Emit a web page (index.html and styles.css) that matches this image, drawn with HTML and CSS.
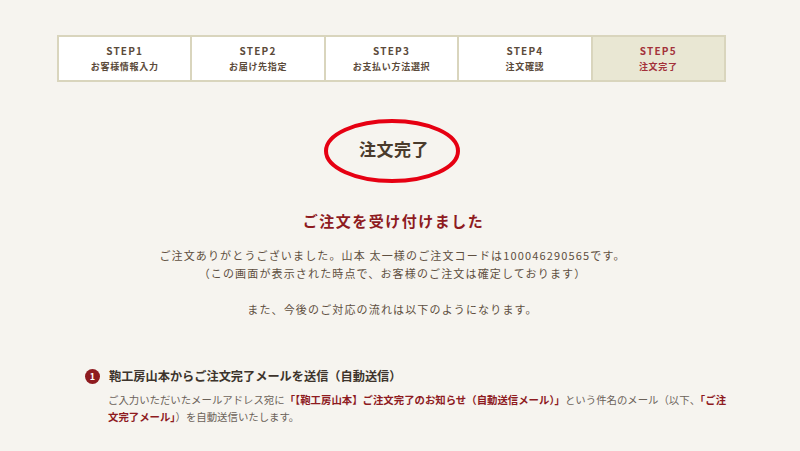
FILE: index.html
```html
<!DOCTYPE html>
<html lang="ja">
<head>
<meta charset="utf-8">
<link rel="stylesheet" href="styles.css">
</head>
<body>
<div class="page">
  <ol class="steps">
    <li class="step"><span class="step-no">STEP1</span><span class="step-label">お客様情報入力</span></li>
    <li class="step"><span class="step-no">STEP2</span><span class="step-label">お届け先指定</span></li>
    <li class="step"><span class="step-no">STEP3</span><span class="step-label">お支払い方法選択</span></li>
    <li class="step"><span class="step-no">STEP4</span><span class="step-label">注文確認</span></li>
    <li class="step current"><span class="step-no">STEP5</span><span class="step-label">注文完了</span></li>
  </ol>

  <div class="title-wrap">
    <h1 class="title">注文完了</h1>
    <svg class="circle-mark" width="140" height="68" viewBox="0 0 140 68"><ellipse cx="70" cy="34" rx="66" ry="30" fill="none" stroke="#e60012" stroke-width="4"/></svg>
  </div>

  <h2 class="thanks">ご注文を受け付けました</h2>
  <p class="lead">ご注文ありがとうございました。山本 太一様のご注文コードは100046290565です。<br>（この画面が表示された時点で、お客様のご注文は確定しております）<br><br>また、今後のご対応の流れは以下のようになります。</p>

  <section class="flow">
    <h3 class="flow-head"><span class="num">1</span>鞄工房山本からご注文完了メールを送信（自動送信）</h3>
    <p class="flow-body"><span>ご入力いただいたメールアドレス宛に</span><strong>「【鞄工房山本】ご注文完了のお知らせ（自動送信メール）」</strong><span>という件名のメール（以下、</span><strong>「ご注</strong><br><strong>文完了メール」</strong><span>）を自動送信いたします。</span></p>
  </section>
</div>
</body>
</html>
```

FILE: styles.css
```css
html, body {
  margin: 0;
  padding: 0;
}
body {
  background: #f6f4ef;
  font-family: "Noto Sans CJK JP", "Noto Sans", sans-serif;
  color: #5b4a3a;
  height: 451px;
  overflow: hidden;
}
.page {
  width: 669px;
  margin-left: 57px;
  padding-top: 35px;
}
.steps {
  list-style: none;
  margin: 0;
  padding: 0;
  display: flex;
  border: 2px solid #d9d5bd;
  height: 43px;
}
.step {
  flex: 1;
  background: #fff;
  border-left: 2px solid #d9d5bd;
  display: flex;
  flex-direction: column;
  align-items: center;
  justify-content: center;
  gap: 3px;
  font-weight: bold;
  color: #5b4a3a;
}
.step:first-child {
  border-left: none;
}
.step-no {
  font-size: 10px;
  line-height: 13px;
  letter-spacing: 1.2px;
}
.step-label {
  font-size: 9px;
  line-height: 13px;
  letter-spacing: 0.7px;
}
.step.current {
  background: #e9e7d3;
  color: #a3323a;
}
.title-wrap {
  position: relative;
  width: 140px;
  height: 65px;
  margin: 36px 0 0 267px;
  display: flex;
  align-items: center;
  justify-content: center;
}
.title {
  margin: 0;
  font-size: 17px;
  font-weight: bold;
  color: #4a3b2c;
  letter-spacing: 0.5px;
  line-height: 20px;
  padding-bottom: 4px;
}
.circle-mark {
  position: absolute;
  left: -2px;
  top: -1px;
}
.thanks {
  margin: 26px 0 0;
  text-align: center;
  font-size: 15px;
  line-height: 24px;
  letter-spacing: 1.5px;
  font-weight: bold;
  color: #8e1b1f;
  padding-left: 4px;
}
.lead {
  margin: 13px 0 0;
  text-align: center;
  font-size: 11px;
  line-height: 18px;
  letter-spacing: 1.15px;
  color: #5e4f40;
  padding-left: 2px;
}
.flow {
  margin: 48px 0 0 28px;
}
.flow-head {
  margin: 0;
  display: flex;
  align-items: center;
  gap: 9px;
  font-size: 12.2px;
  line-height: 20px;
  font-weight: bold;
  color: #3d342c;
}
.num {
  width: 15px;
  height: 15px;
  border-radius: 50%;
  background: #8e1b1f;
  color: #fff;
  font-size: 9px;
  line-height: 15px;
  text-align: center;
  font-weight: bold;
}
.flow-body {
  margin: 5px 0 0 23px;
  width: 630px;
  font-size: 10.4px;
  line-height: 17px;
  color: #6b6259;
}
.flow-body strong {
  color: #8e1b1f;
  font-weight: bold;
}
```
